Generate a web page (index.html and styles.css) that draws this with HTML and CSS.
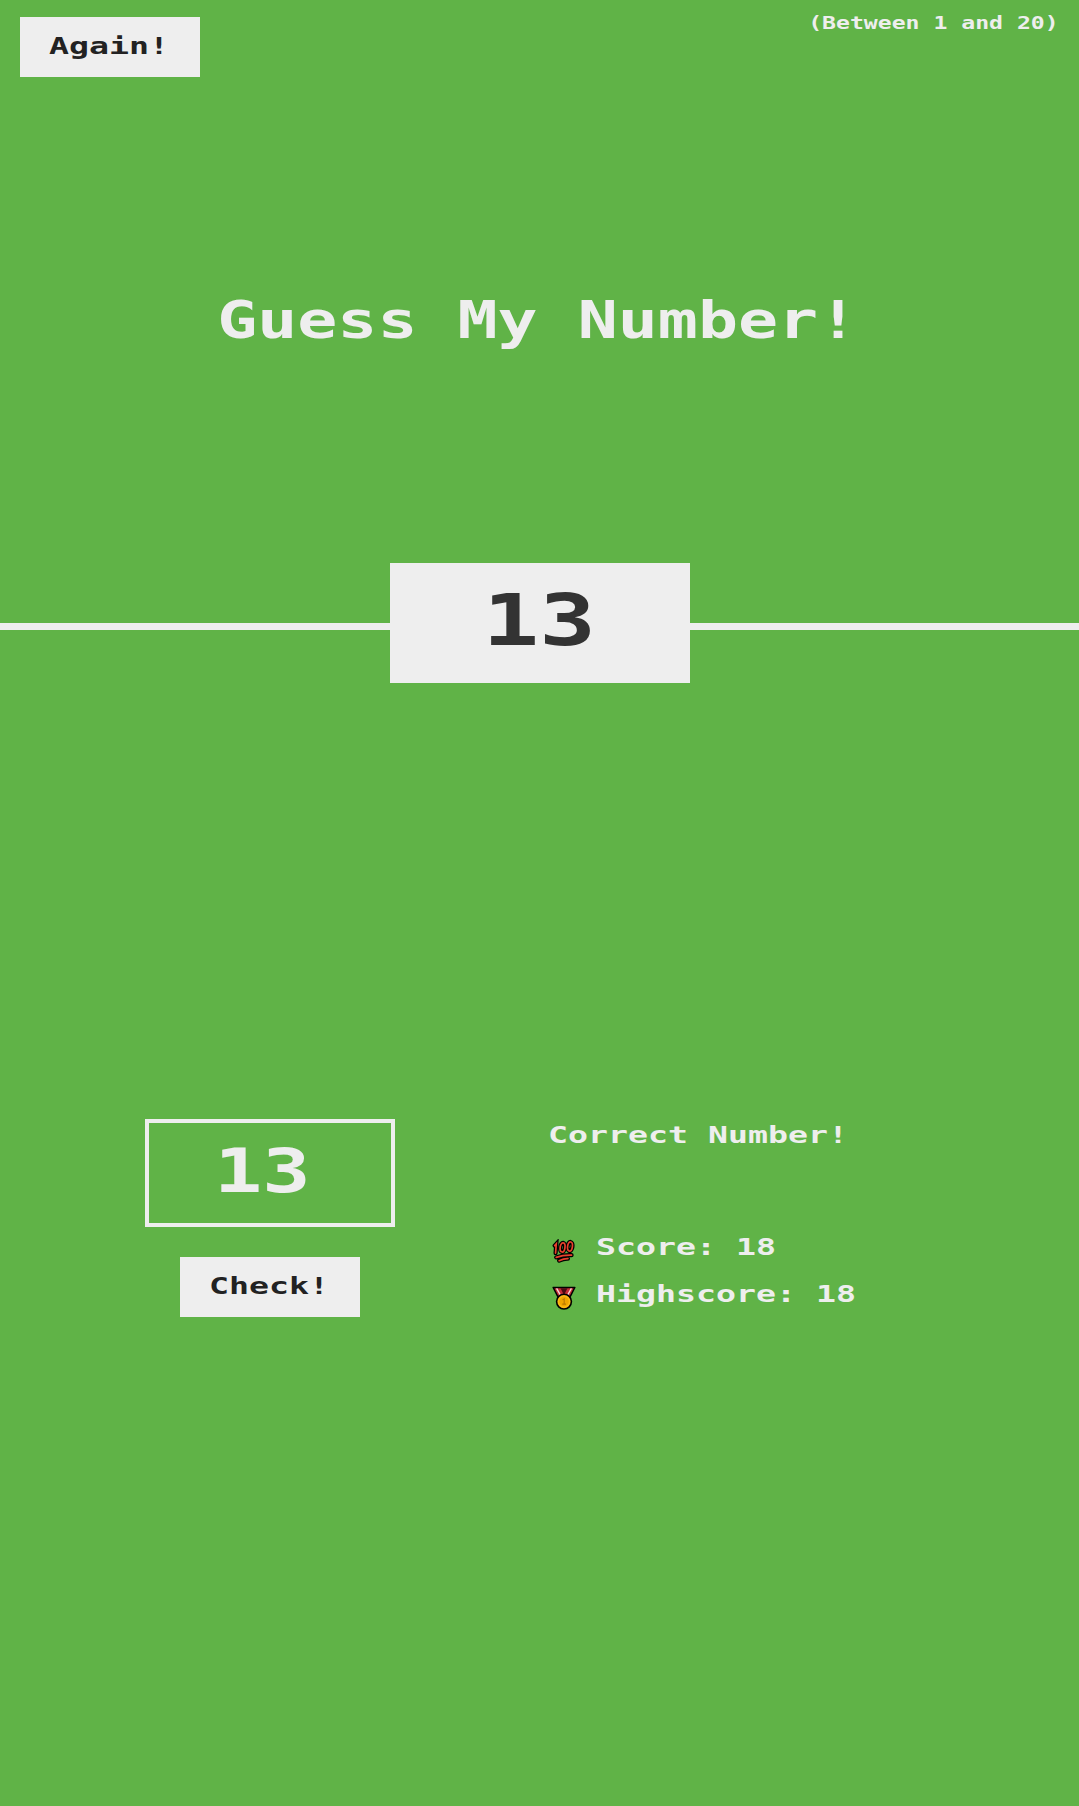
FILE: index.html
```html
<!DOCTYPE html>
<html lang="en">
<head>
<meta charset="utf-8">
<title>Guess My Number!</title>
<link rel="stylesheet" href="styles.css">
</head>
<body>
<header class="header">
  <div class="topbar">
    <button class="btn again"><span class="wide body-text">Again!</span></button>
    <p class="between"><span class="wide">(Between 1 and 20)</span></p>
  </div>
  <h1 class="title"><span class="wide">Guess My Number!</span></h1>
  <div class="number"><span class="wide">13</span></div>
</header>
<main class="main">
  <section class="left">
    <div class="guess" role="textbox"><span class="wide">13</span></div>
    <button class="btn check"><span class="wide body-text">Check!</span></button>
  </section>
  <section class="right">
    <p class="message"><span class="wide body-text">Correct Number!</span></p>
    <p class="row">
      <svg class="icon" viewBox="0 0 24 24">
        <g transform="rotate(-7 12 12)" stroke-linecap="round" fill="none">
          <g stroke="#000" stroke-width="4.2">
            <path d="M3.4 5.5L5.2 4L3.4 13"/>
            <ellipse cx="11" cy="8.3" rx="2.4" ry="4.6" transform="rotate(15 11 8.3)"/>
            <ellipse cx="18.5" cy="8.3" rx="2.4" ry="4.6" transform="rotate(15 18.5 8.3)"/>
            <path d="M3.5 17.4Q11 15.7 19 17M6 21Q11 19.3 15 20"/>
          </g>
          <g stroke="#e8412c" stroke-width="1.7">
            <path d="M3.4 5.5L5.2 4L3.4 13"/>
            <ellipse cx="11" cy="8.3" rx="2.4" ry="4.6" transform="rotate(15 11 8.3)"/>
            <ellipse cx="18.5" cy="8.3" rx="2.4" ry="4.6" transform="rotate(15 18.5 8.3)"/>
            <path d="M3.5 17.4Q11 15.7 19 17M6 21Q11 19.3 15 20"/>
          </g>
        </g>
      </svg>
      <span class="wide body-text">Score: 18</span>
    </p>
    <p class="row">
      <svg class="icon" viewBox="0 0 24 24">
        <path d="M1.2 1.5H22.8L17.5 12H6.5Z" fill="#c42b36" stroke="#000" stroke-width="1.6" stroke-linejoin="round"/>
        <path d="M8.5 2.3H15.5L12 9Z" fill="#4a0a12"/>
        <path d="M4.6 2.3L9.5 11M19.4 2.3L14.5 11" stroke="#f4d5d5" stroke-width="1.4"/>
        <circle cx="12" cy="15.6" r="7.4" fill="#fdb813" stroke="#000" stroke-width="1.6"/>
        <circle cx="12" cy="15.6" r="4.8" fill="#f0a500"/>
        <path d="M10.5 13.9L12.2 12.8V18M10.3 18.1H14" stroke="#b97800" stroke-width="1.1" fill="none"/>
      </svg>
      <span class="wide body-text">Highscore: 18</span>
    </p>
  </section>
</main>
</body>
</html>
```
FILE: styles.css
```css
* {
  margin: 0;
  padding: 0;
  box-sizing: border-box;
}

body {
  display: flex;
  flex-direction: column;
  min-height: 1806px;
  background: #60b347;
  color: #eee;
  font-family: "DejaVu Sans Mono", "Liberation Mono", monospace;
  font-weight: bold;
  line-height: 1;
}

/* Widened letters give the blocky arcade look */
.wide {
  display: block;
  width: max-content;
  white-space: pre;
  transform: scaleX(1.31);
}

.body-text {
  font-size: 23.3px;
  transform: scaleX(1.426);
}

.header {
  display: flex;
  flex-direction: column;
  align-items: center;
  height: 630px;
  border-bottom: 7px solid #eee;
}

.topbar {
  display: flex;
  flex-shrink: 0;
  justify-content: space-between;
  align-self: stretch;
  height: 296px;
  padding: 17px 20px 0;
}

.btn {
  display: flex;
  align-items: center;
  justify-content: center;
  width: 180px;
  height: 60px;
  padding: 0 2px 2px 0;
  border: none;
  background: #eee;
  color: #222;
  font: inherit;
}

.between {
  margin-top: -3px;
  font-size: 17.8px;
}

.between .wide {
  transform: scaleX(1.3);
  transform-origin: right;
}

.title {
  flex-shrink: 0;
  height: 267px;
  padding-right: 4px;
  font-size: 50.8px;
}

.number {
  display: flex;
  flex-shrink: 0;
  align-items: center;
  justify-content: center;
  width: 300px;
  height: 120px;
  padding-bottom: 6px;
  background: #eee;
  color: #333;
  font-size: 72px;
}

.number .wide {
  transform: scaleX(1.31);
}

.main {
  display: grid;
  grid-template-columns: 540px 1fr;
  padding-top: 489px;
}

.left {
  display: flex;
  flex-direction: column;
  align-items: center;
  gap: 30px;
}

.guess {
  display: flex;
  align-items: center;
  justify-content: center;
  width: 250px;
  height: 108px;
  padding: 0 16px 4px 0;
  border: 4px solid #eee;
  font-size: 60.4px;
}

.guess .wide {
  transform: scaleX(1.33);
}

.right {
  padding: 4px 0 0 8px;
}

.right .wide {
  transform-origin: left;
}

.message {
  height: 112px;
}

.row {
  display: flex;
  gap: 20px;
  height: 47px;
  padding-left: 4px;
}

.icon {
  width: 24px;
  height: 24px;
  margin-top: 4px;
}
```
